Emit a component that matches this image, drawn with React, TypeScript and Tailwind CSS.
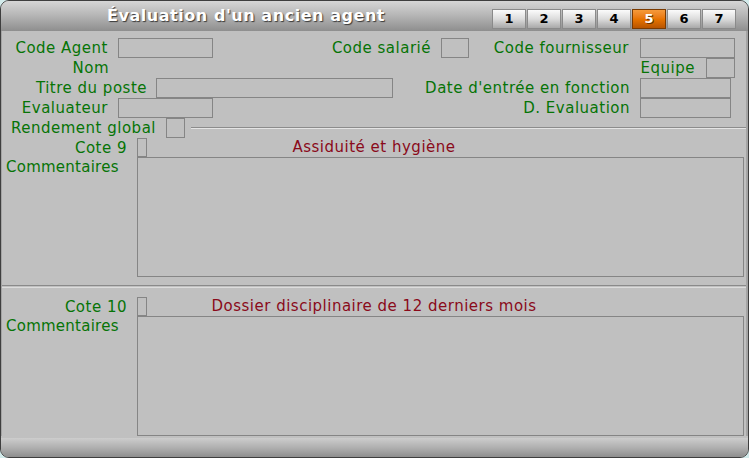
import React from 'react';

const font = { fontFamily: '"DejaVu Sans", Verdana, sans-serif' };

function Field({ w, h = 'h-[20px]' }: { w: string; h?: string }) {
  return <div className={`${w} ${h} shrink-0 border border-[#858585] bg-[#c0c0c0]`} />;
}

function Label({ w, children }: { w: string; children: React.ReactNode }) {
  return (
    <div className={`${w} shrink-0 text-right text-[15px] leading-[20px] tracking-[0.5px] text-[#067406] whitespace-nowrap`}>
      {children}
    </div>
  );
}

function Tab({ n, active }: { n: number; active?: boolean }) {
  return (
    <div
      className={
        active
          ? 'w-[34px] h-[20px] flex items-center justify-center border border-[#7a3a00] bg-gradient-to-b from-[#f59a3a] via-[#e87400] to-[#b85400] text-white text-[13px] font-bold [text-shadow:1px_1px_0_#603000]'
          : 'w-[34px] h-[20px] flex items-center justify-center border border-[#8a8a8a] bg-gradient-to-b from-[#fbfbfb] via-[#dcdcdc] to-[#a9a9a9] text-black text-[13px] font-bold'
      }
    >
      {n}
    </div>
  );
}

function Section({ cote, title }: { cote: string; title: string }) {
  return (
    <>
      <div className="flex h-[18px] items-start">
        <Label w="w-[125px]">{cote}</Label>
        <div className="ml-[10px] w-[10px] h-[19px] border border-[#858585]" />
        <div className="w-[454px] text-center text-[15px] leading-[18px] tracking-[0.5px] text-[#8a0a1a] whitespace-nowrap">{title}</div>
      </div>
      <div className="flex h-[120px] mt-[1px]">
        <div className="w-[135px] pl-[4px] text-[15px] leading-[20px] tracking-[0.25px] text-[#067406]">Commentaires</div>
        <div className="w-[607px] h-[120px] border border-[#858585]" />
      </div>
    </>
  );
}

export default function App() {
  return (
    <div className="w-[749px] h-[458px] bg-[#d3ebeb]" style={font}>
      <div className="w-full h-full rounded-[9px] border border-[#3e3e3e] overflow-hidden flex flex-col bg-[#c0c0c0]">
        {/* title bar */}
        <div className="h-[30px] shrink-0 flex items-start bg-gradient-to-b from-[#d6d6d6] via-[#b4b4b4] to-[#8e8e8e]">
          <div className="w-[490px] h-[30px] flex items-center justify-center text-white text-[16px] font-bold tracking-[0.55px] [text-shadow:1px_1px_1px_#3a3a3a]">
            Évaluation d'un ancien agent
          </div>
          <div className="flex gap-[1px] mt-[8px] ml-[1px]">
            {[1, 2, 3, 4, 5, 6, 7].map((n) => (
              <Tab key={n} n={n} active={n === 5} />
            ))}
          </div>
        </div>

        <div className="flex-1 flex flex-col border-l border-r-2 border-[#a4a4a4] pt-[7px]">
          <div className="flex h-[20px]">
            <Label w="w-[106px]">Code Agent</Label>
            <div className="ml-[10px]"><Field w="w-[95px]" /></div>
            <Label w="w-[218px]">Code salarié</Label>
            <div className="ml-[10px]"><Field w="w-[28px]" /></div>
            <Label w="w-[160px]">Code fournisseur</Label>
            <div className="ml-[11px]"><Field w="w-[95px]" /></div>
          </div>
          <div className="flex h-[20px]">
            <Label w="w-[107px]">Nom</Label>
            <Label w="w-[586px]">Equipe</Label>
            <div className="ml-[11px]"><Field w="w-[29px]" /></div>
          </div>
          <div className="flex h-[20px]">
            <Label w="w-[145px]">Titre du poste</Label>
            <div className="ml-[9px]"><Field w="w-[237px]" /></div>
            <Label w="w-[237px]">Date d'entrée en fonction</Label>
            <div className="ml-[10px]"><Field w="w-[91px]" /></div>
          </div>
          <div className="flex h-[20px]">
            <Label w="w-[106px]">Evaluateur</Label>
            <div className="ml-[10px]"><Field w="w-[95px]" /></div>
            <Label w="w-[417px]">D. Evaluation</Label>
            <div className="ml-[10px]"><Field w="w-[91px]" /></div>
          </div>
          <div className="flex h-[20px] items-center">
            <Label w="w-[154px]">Rendement global</Label>
            <div className="ml-[10px]"><Field w="w-[19px]" /></div>
            <div className="ml-[6px] flex-1 h-[2px] border-t border-[#8c8c8c] border-b border-b-[#e4e4e4]" />
          </div>

          <Section cote="Cote 9" title="Assiduité et hygiène" />

          <div className="mt-[8px] h-[3px] border-t border-[#8a8a8a] border-b border-b-[#dcdcdc]" />

          <div className="mt-[9px]">
            <Section cote="Cote 10" title="Dossier disciplinaire de 12 derniers mois" />
          </div>
        </div>

        {/* bottom bar */}
        <div className="h-[19px] shrink-0 mt-[2px] bg-gradient-to-b from-[#cdcdcd] via-[#b0b0b0] to-[#8e8e8e]" />
      </div>
    </div>
  );
}
